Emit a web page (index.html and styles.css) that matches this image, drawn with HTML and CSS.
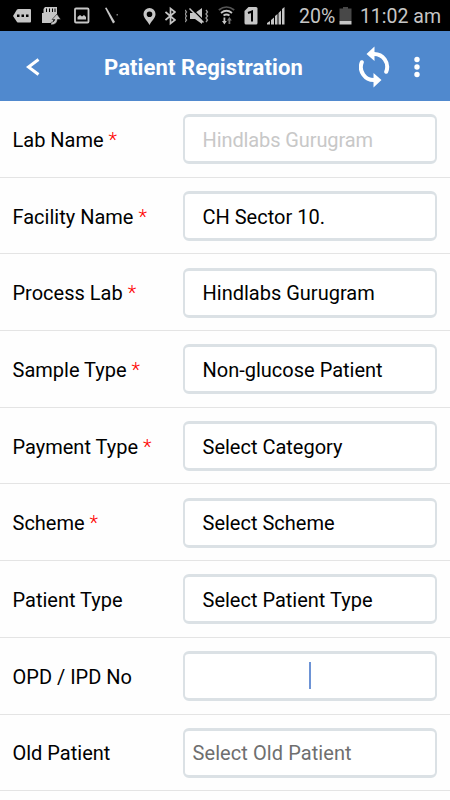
FILE: index.html
```html
<!DOCTYPE html>
<html lang="en">
<head>
    <meta charset="UTF-8">
    <meta name="viewport" content="width=device-width, initial-scale=1.0">
    <title>Patient Registration</title>
    <link rel="stylesheet" href="styles.css">
</head>
<body>
    <div class="status-bar">
        <div class="notifications">
            <!-- message -->
            <svg width="19" height="31" viewBox="0 0 19 31">
                <path d="M0 16L4 9.500Q4.500 9 5.500 9H17Q18 9 18 10V21.500Q18 22.500 17 22.500H5.500Q4.500 22.500 4 22Z" fill="#c6c6c6"/>
                <path d="M4 14.500h2.500v2.500H4zM8.500 14.500H11v2.500H8.500zM13 14.500h2.500v2.500H13z" fill="#000"/>
            </svg>
            <!-- memory card -->
            <svg width="20" height="31" viewBox="0 0 20 31">
                <path d="M3 7H15V15L12 18L10.500 23H0V13H1.500V9Z" fill="#c6c6c6"/>
                <path d="M4.500 8.500v3.500M7.500 8.500v3.500M10.500 8.500v3.500M13 8.500v3.500" stroke="#000" stroke-width="1"/>
                <path d="M9 25Q15 24.500 15.500 19.500H18.800L15 14L10 19.500H12.800Q12.300 22 9 22.500Z" fill="#c6c6c6" stroke="#000" stroke-width=".5"/>
            </svg>
            <!-- picture -->
            <svg width="18" height="31" viewBox="-2 0 18 31">
                <rect x="1" y="8.500" width="13.500" height="14" rx="1" fill="none" stroke="#c6c6c6" stroke-width="1.800"/>
                <path d="M3.500 19.500V17L6 15L8 16.500L10 15L12 17V19.500Z" fill="#c6c6c6"/>
            </svg>
            <!-- wand -->
            <svg width="19" height="31" viewBox="-5 0 19 31">
                <path d="M0 8L1.500 7.500L10 22L8 23.500Z" fill="#c6c6c6"/>
                <rect x="11.500" y="14" width="1.500" height="1.500" fill="#777"/>
            </svg>
        </div>
        <div class="system">
            <!-- location -->
            <svg width="13" height="31" viewBox="0 0 13 31">
                <path d="M6.500 8a6 6 0 0 0-6 6C.5 18 4 20 6.500 25C9 20 12.500 18 12.500 14a6 6 0 0 0-6-6Zm0 3.500a2.800 2.800 0 1 1 0 5.600a2.800 2.800 0 0 1 0-5.600Z" fill="#c6c6c6" fill-rule="evenodd"/>
            </svg>
            <!-- bluetooth -->
            <svg width="11" height="31" viewBox="0 0 11 31">
                <path d="M.5 12L10 20L5.500 23.500V8.500L10 12L.5 20" fill="none" stroke="#c6c6c6" stroke-width="1.700"/>
            </svg>
            <!-- vibrate, sound off -->
            <svg width="24" height="31" viewBox="1 0 24 31">
                <path d="M6 13H11L18 8V24L11 19H6Z" fill="#c6c6c6"/>
                <path d="M6.500 7.500L21 22" stroke="#000" stroke-width="1.500"/>
                <path d="M5.500 8.500L19.500 22.500" stroke="#c6c6c6" stroke-width="1.500"/>
                <path d="M1 10l1.500 2L1 14l1.500 2L1 18l1.500 2L1 22M22 10l1.500 2L22 14l1.500 2L22 18l1.500 2L22 22" fill="none" stroke="#999" stroke-width="1.300"/>
            </svg>
            <!-- wifi -->
            <svg width="17" height="31" viewBox="0 0 17 31">
                <path d="M.8 10Q8.500 4 16.200 10" fill="none" stroke="#555" stroke-width="1.700"/>
                <path d="M3 13Q8.500 8.500 14 13M5.500 15.500Q8.500 13.500 11.500 15.500" fill="none" stroke="#c6c6c6" stroke-width="1.800"/>
                <path d="M5.500 17.500H7.300V21H8.800L6.400 24.500L4 21H5.500Z" fill="#c6c6c6"/>
                <path d="M10.500 24H12.300V20.500H13.800L11.400 17L9 20.500H10.500Z" fill="#777"/>
            </svg>
            <!-- sim 1 -->
            <svg width="14" height="31" viewBox="0 0 14 31">
                <path d="M4.500 7H12Q13.500 7 13.500 8.500V23Q13.500 24.500 12 24.500H2Q.5 24.500.5 23V11Z" fill="#c6c6c6"/>
                <path d="M4 13L8 11.500V21.500" fill="none" stroke="#000" stroke-width="2"/>
            </svg>
            <!-- signal -->
            <svg width="18" height="31" viewBox="0 0 18 31">
                <path d="M0 24.500V23L3 21V24.500ZM4 24.500V20L7 17.500V24.500ZM8 24.500V16L10.500 14V24.500ZM11.500 24.500V13L14 10.500V24.500ZM15 24.500V9L17.500 7V24.500Z" fill="#c6c6c6"/>
            </svg>
        </div>
        <span class="battery-level">20%</span>
        <svg class="battery" width="13" height="31" viewBox="0 0 13 31">
            <path d="M4 7H9V8.500H12.500V21H.5V8.500H4Z" fill="#484848"/>
            <path d="M.5 21H12.500V24.500H.5Z" fill="#c6c6c6"/>
        </svg>
        <span class="time">11:02 am</span>
    </div>

    <div class="header">
        <svg class="back" width="14" height="18" viewBox="0 0 14 18">
            <path d="M12.500 1.500L2.500 9L12.500 16.500" fill="none" stroke="#fff" stroke-width="3"/>
        </svg>
        <h1>Patient Registration</h1>
        <svg class="refresh" width="31" height="42" viewBox="0 0 31 42">
            <path d="M14.500 8A13 13 0 0 1 27.200 25.800" fill="none" stroke="#fff" stroke-width="4" stroke-linecap="round"/>
            <path d="M15.500 34A13 13 0 0 1 2.800 16.200" fill="none" stroke="#fff" stroke-width="4" stroke-linecap="round"/>
            <path d="M15.500 .5V15L7.500 8ZM14.500 27V41.500L22.500 34Z" fill="#fff"/>
        </svg>
        <svg class="more" width="6" height="22" viewBox="0 0 6 22">
            <circle cx="3" cy="3.500" r="2.700" fill="#fff"/>
            <circle cx="3" cy="11" r="2.700" fill="#fff"/>
            <circle cx="3" cy="18.500" r="2.700" fill="#fff"/>
        </svg>
    </div>

    <div class="form">
        <div class="row">
            <div class="label">Lab Name <span class="required">*</span></div>
            <div class="field disabled">Hindlabs Gurugram</div>
        </div>
        <div class="row">
            <div class="label">Facility Name <span class="required">*</span></div>
            <div class="field">CH Sector 10.</div>
        </div>
        <div class="row">
            <div class="label">Process Lab <span class="required">*</span></div>
            <div class="field">Hindlabs Gurugram</div>
        </div>
        <div class="row">
            <div class="label">Sample Type <span class="required">*</span></div>
            <div class="field">Non-glucose Patient</div>
        </div>
        <div class="row">
            <div class="label">Payment Type <span class="required">*</span></div>
            <div class="field">Select Category</div>
        </div>
        <div class="row">
            <div class="label">Scheme <span class="required">*</span></div>
            <div class="field">Select Scheme</div>
        </div>
        <div class="row">
            <div class="label">Patient Type</div>
            <div class="field">Select Patient Type</div>
        </div>
        <div class="row">
            <div class="label">OPD / IPD No</div>
            <div class="field focused"><span class="cursor"></span></div>
        </div>
        <div class="row">
            <div class="label">Old Patient</div>
            <div class="field placeholder">Select Old Patient</div>
        </div>
    </div>
</body>
</html>
```
FILE: styles.css
```css
* {
    box-sizing: border-box;
}
body {
    margin: 0;
    height: 800px;
    overflow: hidden;
    background: #fefefe;
    font-family: Roboto, sans-serif;
    color: #000;
}
svg {
    flex: none;
}
.status-bar {
    display: flex;
    align-items: center;
    height: 31px;
    padding: 0 9px 0 13px;
    background: #000;
    color: #c6c6c6;
    font-size: 19.5px;
    white-space: nowrap;
}
.notifications {
    display: flex;
    gap: 10px;
    width: 130px;
}
.system {
    display: flex;
    gap: 9px;
}
.battery-level {
    margin-left: 14px;
    padding-top: 2px;
}
.battery {
    margin-left: 4px;
}
.time {
    margin-left: auto;
    padding-top: 2px;
}
.header {
    display: flex;
    align-items: center;
    height: 70px;
    padding: 2px 30px 0 26px;
    background: #5089ce;
    color: #fff;
}
.header h1 {
    margin: 0 auto 0 64px;
    padding-top: 1px;
    font-size: 22px;
    font-weight: 700;
    letter-spacing: 0.1px;
    white-space: nowrap;
}
.more {
    margin-left: 24px;
}
.row {
    display: flex;
    align-items: center;
    height: 76.7px;
    padding: 1px 13px 0 12.5px;
    border-bottom: 1px solid #e4e4e4;
    font-size: 20px;
}
.label {
    width: 170px;
    padding-top: 1px;
    white-space: nowrap;
}
.required {
    color: #f00;
    font-weight: 300;
}
.field {
    display: flex;
    align-items: center;
    flex: 1;
    height: 50px;
    padding: 1px 18px 0;
    border: 2px solid #dbe1e5;
    border-top-width: 3px;
    border-bottom-width: 3px;
    border-radius: 6px;
    background: #fff;
}
.disabled {
    color: #c8c8c8;
    letter-spacing: -0.1px;
}
.placeholder {
    padding: 1px 8px 0;
    color: #6f6f6f;
    letter-spacing: 0.08px;
}
.focused {
    justify-content: center;
    padding-bottom: 2px;
}
.cursor {
    width: 2px;
    height: 27px;
    background: #6d93d5;
}
```
